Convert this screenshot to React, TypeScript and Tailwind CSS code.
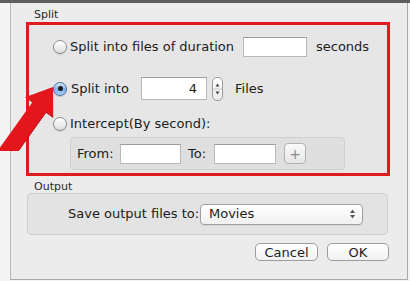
import React from "react";

function Radio({ checked }: { checked?: boolean }) {
  if (checked) {
    return (
      <div className="w-[14px] h-[14px] shrink-0 rounded-full border border-[#4f6f9c] bg-[linear-gradient(#d4e6fa,#7fb2ea_55%,#a9d0f7)] flex items-center justify-center shadow-[0_1px_1px_rgba(0,0,0,0.15)]">
        <div className="w-[5px] h-[5px] rounded-full bg-[#1b1b1b]" />
      </div>
    );
  }
  return (
    <div className="w-[14px] h-[14px] shrink-0 rounded-full border border-[#8e8e8e] bg-[linear-gradient(#ffffff,#f0f0f0_50%,#dcdcdc)] shadow-[0_1px_1px_rgba(0,0,0,0.12)]" />
  );
}

function Field({ w, h, value }: { w: string; h: string; value?: string }) {
  return (
    <div
      className={`${w} ${h} shrink-0 bg-white border border-[#b9b9b9] border-t-[#9d9d9d] flex items-center justify-end pr-[9px] leading-none`}
    >
      {value}
    </div>
  );
}

export default function App() {
  return (
    <div className="relative w-[410px] h-[281px] overflow-hidden bg-[#f4f4f4] font-['DejaVu_Sans',sans-serif] text-[13px] text-[#1c1c1c]">
      <div className="h-[3px] bg-[#5e5e5e]" />
      <div className="flex h-[277px]">
        <div className="w-[11px] shrink-0 bg-[#f4f4f4] border-r border-[#b8b8b8]" />
        <div className="w-[397px] shrink-0 bg-[#ececec] border-r border-b border-[#a9a9a9] flex flex-col">
          <div className="mt-[5px] h-[13px] pl-[23px] text-[11px] leading-[13px] text-[#2a2a2a]">Split</div>
          <div className="mt-[1px] ml-[15px] w-[364px] h-[154px] border-[3px] border-[#e01a1f] bg-[#e6e6e6] flex flex-col">
            <div className="mt-[12px] h-[20px] pl-[24px] flex items-center">
              <Radio />
              <span className="ml-[3px] w-[173px] whitespace-nowrap">Split into files of duration</span>
              <Field w="w-[64px]" h="h-[20px]" />
              <span className="ml-[9px]">seconds</span>
            </div>
            <div className="mt-[20px] h-[23px] pl-[24px] flex items-center">
              <Radio checked />
              <span className="ml-[4px] w-[70px] whitespace-nowrap">Split into</span>
              <Field w="w-[66px]" h="h-[23px]" value="4" />
              <div className="ml-[5px] w-[11px] h-[24px] rounded-[5px] border border-[#9a9a9a] bg-[linear-gradient(#ffffff,#ececec)] flex flex-col items-center justify-center">
                <svg width="9" height="20" viewBox="0 0 9 20">
                  <path d="M2.5 7.5 L4.5 4.5 L6.5 7.5 Z" fill="#444" />
                  <line x1="0" y1="10" x2="9" y2="10" stroke="#c4c4c4" strokeWidth="1" />
                  <path d="M2.5 12.5 L4.5 15.5 L6.5 12.5 Z" fill="#444" />
                </svg>
              </div>
              <span className="ml-[12px]">Files</span>
            </div>
            <div className="mt-[16px] h-[16px] pl-[24px] flex items-center">
              <Radio />
              <span className="ml-[3px] whitespace-nowrap">Intercept(By second):</span>
            </div>
            <div className="mt-[5px] ml-[41px] w-[275px] h-[33px] rounded-[4px] border border-[#d0d0d0] bg-[#dfdfdf] flex items-center pl-[6px]">
              <span className="w-[43px]">From:</span>
              <Field w="w-[61px]" h="h-[20px]" />
              <span className="ml-[7px] w-[26px]">To:</span>
              <Field w="w-[62px]" h="h-[20px]" />
              <div className="ml-[8px] w-[22px] h-[21px] rounded-[4px] border border-[#b3b3b3] bg-[linear-gradient(#fafafa,#e6e6e6)] flex items-center justify-center text-[#8a8a8a] text-[14px] leading-none">
                +
              </div>
            </div>
          </div>
          <div className="mt-[4px] h-[13px] pl-[23px] text-[11px] leading-[13px] text-[#2a2a2a]">Output</div>
          <div className="ml-[16px] w-[361px] h-[42px] rounded-[4px] border border-[#d0d0d0] bg-[#e3e3e3] flex items-center pl-[40px]">
            <span className="w-[132px] whitespace-nowrap">Save output files to:</span>
            <div className="w-[163px] h-[21px] rounded-[4px] border border-[#a0a0a0] bg-[linear-gradient(#ffffff,#f0f0f0)] flex items-center pl-[8px] pr-[6px] justify-between shadow-[0_1px_0_rgba(0,0,0,0.06)]">
              <span>Movies</span>
              <svg width="7" height="12" viewBox="0 0 7 12">
                <path d="M1 5 L3.5 1.5 L6 5 Z" fill="#555" />
                <path d="M1 7 L3.5 10.5 L6 7 Z" fill="#555" />
              </svg>
            </div>
          </div>
          <div className="mt-[8px] flex justify-end pr-[18px] gap-[9px]">
            <div className="w-[63px] h-[18px] rounded-[5px] border border-[#9c9c9c] bg-[linear-gradient(#ffffff,#f1f1f1)] flex items-center justify-center leading-none">
              Cancel
            </div>
            <div className="w-[62px] h-[18px] rounded-[5px] border border-[#9c9c9c] bg-[linear-gradient(#ffffff,#f1f1f1)] flex items-center justify-center leading-none">
              OK
            </div>
          </div>
        </div>
      </div>
      <svg className="absolute left-0 top-0" width="70" height="170" viewBox="0 0 70 170">
        <path
          d="M53 87 L53.2 117.5 L46 112.3 L18.3 151 L0 151 L0 147.5 L32.2 102.5 L25 97.3 Z"
          fill="#e3161b"
        />
        <path d="M53.2 117.5 L46 112.3 L18.3 151" fill="none" stroke="#b80f14" strokeWidth="1" />
      </svg>
    </div>
  );
}
